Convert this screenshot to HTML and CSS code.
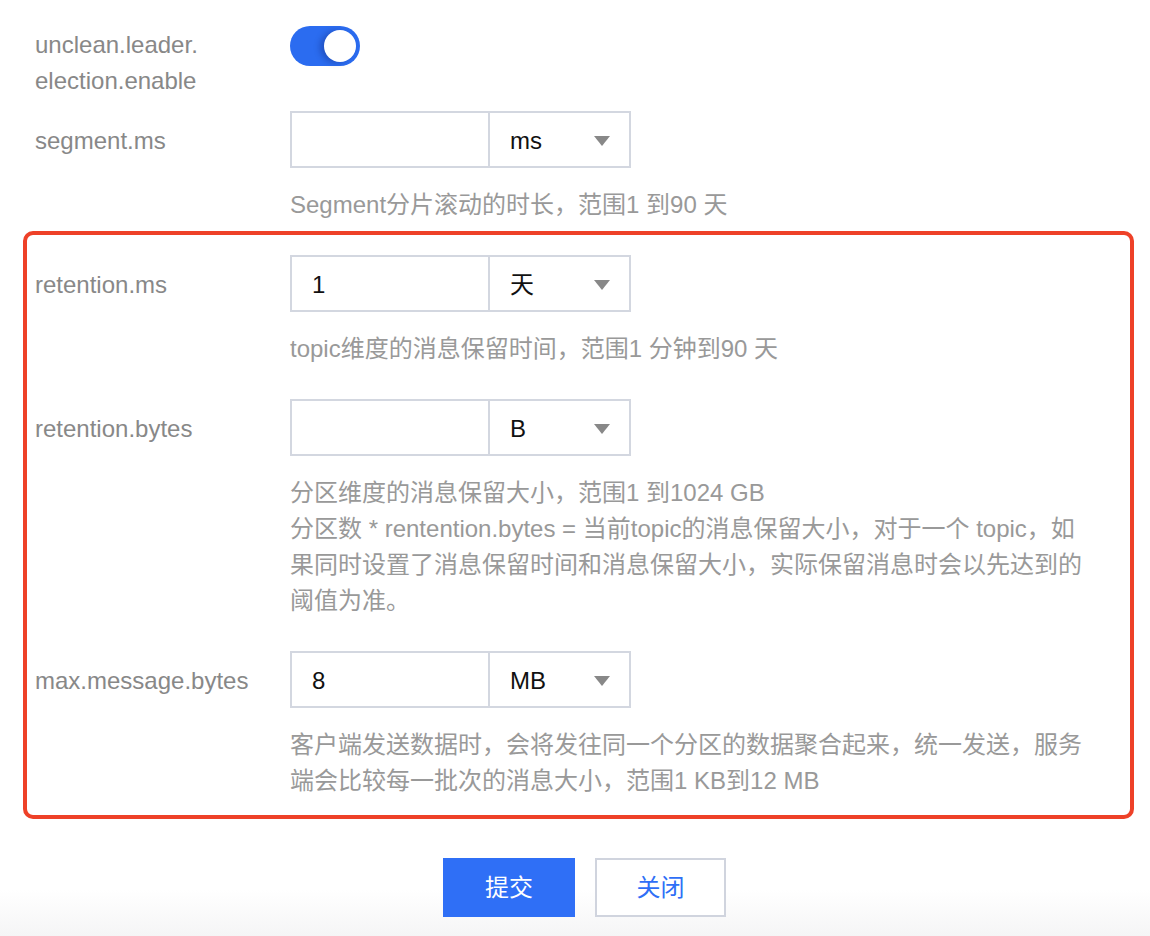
FILE: index.html
```html
<!DOCTYPE html>
<html lang="zh-CN">
<head>
    <meta charset="UTF-8">
    <meta name="viewport" content="width=device-width, initial-scale=1.0">
    <title>Topic 配置</title>
    <link rel="stylesheet" href="styles.css">
</head>
<body>
    <div class="form">
        <div class="row row-switch">
            <div class="label">unclean.leader.<wbr>election.enable</div>
            <div class="field">
                <div class="switch on"><span class="knob"></span></div>
            </div>
        </div>

        <div class="row">
            <div class="label">segment.ms</div>
            <div class="field">
                <div class="combo">
                    <input class="num" type="text" value="">
                    <div class="select"><span>ms</span><i class="arrow"></i></div>
                </div>
                <p class="help">Segment分片滚动的时长，范围1 到90 天</p>
            </div>
        </div>

        <div class="highlight">
            <div class="row">
                <div class="label">retention.ms</div>
                <div class="field">
                    <div class="combo">
                        <input class="num" type="text" value="1">
                        <div class="select"><span>天</span><i class="arrow"></i></div>
                    </div>
                    <p class="help">topic维度的消息保留时间，范围1 分钟到90 天</p>
                </div>
            </div>

            <div class="row">
                <div class="label">retention.bytes</div>
                <div class="field">
                    <div class="combo">
                        <input class="num" type="text" value="">
                        <div class="select"><span>B</span><i class="arrow"></i></div>
                    </div>
                    <p class="help">分区维度的消息保留大小，范围1 到1024 GB<br>分区数 * rentention.bytes = 当前topic的消息保留大小，对于一个 topic，如果同时设置了消息保留时间和消息保留大小，实际保留消息时会以先达到的阈值为准。</p>
                </div>
            </div>

            <div class="row">
                <div class="label">max.message.bytes</div>
                <div class="field">
                    <div class="combo">
                        <input class="num" type="text" value="8">
                        <div class="select"><span>MB</span><i class="arrow"></i></div>
                    </div>
                    <p class="help">客户端发送数据时，会将发往同一个分区的数据聚合起来，统一发送，服务端会比较每一批次的消息大小，范围1 KB到12 MB</p>
                </div>
            </div>
        </div>

        <div class="actions">
            <button class="btn btn-primary">提交</button>
            <button class="btn btn-default">关闭</button>
        </div>
    </div>
</body>
</html>
```

FILE: styles.css
```css
* {
    margin: 0;
    padding: 0;
    box-sizing: border-box;
}

body {
    font-family: "Liberation Sans", Arial, "Noto Sans CJK SC", sans-serif;
    font-size: 24px;
    line-height: 36px;
    min-height: 936px;
    background: linear-gradient(to bottom, #fff 0, #fff 890px, #f5f5f6 936px);
}

.form {
    padding: 26px 16px 0 35px;
}

.row {
    display: flex;
    margin-bottom: 32px;
}

.row-switch {
    margin-bottom: 12px;
}

.label {
    width: 255px;
    flex-shrink: 0;
    color: #888;
    padding-top: 12px;
}

.row-switch .label {
    padding-top: 1px;
}

.field {
    flex: 1;
}

/* switch */
.switch {
    width: 70px;
    height: 40px;
    border-radius: 20px;
    background: #2b6cf0;
    position: relative;
}

.switch .knob {
    position: absolute;
    top: 4px;
    right: 4px;
    width: 32px;
    height: 32px;
    border-radius: 50%;
    background: #fff;
    box-shadow: -4px 1px 6px rgba(0, 0, 60, 0.25);
}

/* input + unit select */
.combo {
    display: flex;
    height: 57px;
}

.num {
    width: 200px;
    height: 57px;
    border: 2px solid #d3d7e0;
    padding: 2px 20px 0;
    font: inherit;
    color: #111;
    outline: none;
    background: #fff;
}

.select {
    width: 143px;
    height: 57px;
    margin-left: -2px;
    border: 2px solid #d3d7e0;
    display: flex;
    align-items: center;
    justify-content: space-between;
    padding: 3px 19px 0 20px;
    color: #111;
}

.arrow {
    width: 0;
    height: 0;
    border-left: 8px solid transparent;
    border-right: 8px solid transparent;
    border-top: 10px solid #888;
}

.help {
    margin-top: 19px;
    width: 800px;
    color: #999;
}

/* red annotation box, sits tight under the segment row */
.highlight {
    margin: -24px 0 0 -12px;
    padding: 20px 0 16px 8px;
    border: 4px solid #ee4128;
    border-radius: 10px;
}

.highlight .row:last-child {
    margin-bottom: 0;
}

.actions {
    margin-top: 39px;
    display: flex;
    justify-content: center;
    gap: 20px;
}

.btn {
    width: 132px;
    height: 59px;
    font: inherit;
    cursor: pointer;
}

.btn-primary {
    background: #2f6ff6;
    color: #fff;
    border: none;
}

.btn-default {
    width: 131px;
    background: #fff;
    color: #2f6ff6;
    border: 2px solid #d0d4de;
}
```
